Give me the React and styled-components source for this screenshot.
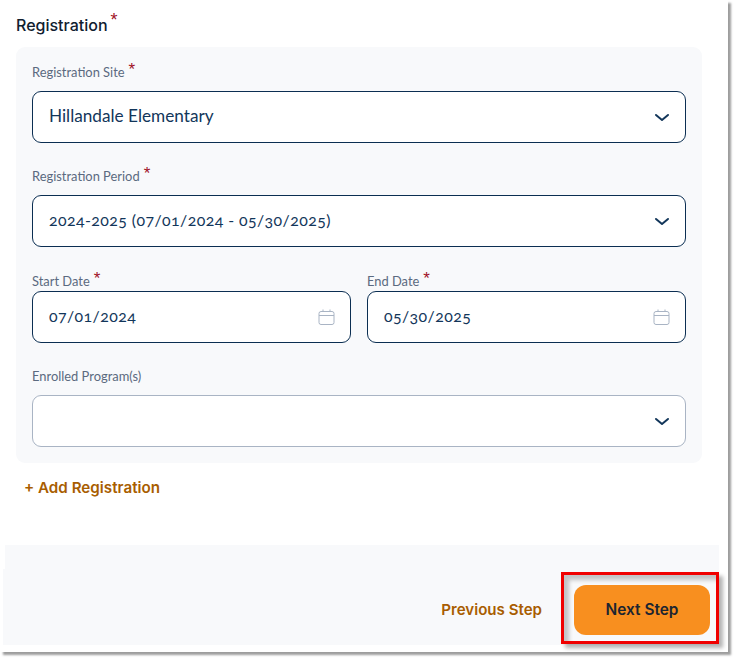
import { createGlobalStyle } from "styled-components"
import styled from "styled-components"

const GlobalStyle = createGlobalStyle`
  html, body {
    margin: 0;
    min-height: 661px;
    background: #fff;
  }
  body {
    font-family: "Inter", "Liberation Sans", sans-serif;
  }
  * {
    box-sizing: border-box;
  }
`

const Sheet = styled.div`
  width: 728px;
  height: 652px;
  background: #fff;
  box-shadow: 3px 3px 2px rgba(60, 60, 60, 0.5);
  display: flex;
  flex-direction: column;
`

const Content = styled.div`
  padding: 0 26px 0 16px;
  height: 545px;
`

const Heading = styled.h2`
  margin: 0;
  height: 47px;
  padding-top: 15px;
  font-size: 16px;
  line-height: 20px;
  font-weight: 500;
  color: #10202f;
`

const Star = styled.sup`
  font-family: "Liberation Sans", sans-serif;
  color: #a01127;
  font-size: ${(p) => p.$size || 17}px;
  font-weight: 400;
  line-height: 0;
  margin-left: ${(p) => (p.$size ? 3 : 4)}px;
  position: relative;
  top: ${(p) => (p.$size ? 1 : 3)}px;
  vertical-align: super;
`

const Card = styled.div`
  background: #f8f9fb;
  border-radius: 9px;
  padding: 16px;
  display: flex;
  flex-direction: column;
  gap: 24px;
`

const Row = styled.div`
  display: grid;
  grid-template-columns: 1fr 1fr;
  gap: 16px;
`

const Label = styled.label`
  display: block;
  height: ${(p) => p.$height}px;
  line-height: 18px;
  padding-top: ${(p) => (p.$height === 20 ? 1 : 0)}px;
  font-family: "Lato", "Liberation Sans", sans-serif;
  font-size: 12.9px;
  color: #5b6a80;
  white-space: nowrap;
`

const Control = styled.div`
  height: 52px;
  background: #fff;
  border: 1px solid ${(p) => (p.$muted ? "#a9b4c4" : "#0b2e52")};
  border-radius: 9px;
  padding: 0 15px 0 16px;
  display: flex;
  align-items: center;
  justify-content: space-between;
  font-family: "Lato", "Liberation Sans", sans-serif;
  font-variant-numeric: oldstyle-nums;
  font-size: ${(p) => p.$size || 15.9}px;
  letter-spacing: ${(p) => (p.$size ? 0 : 0.42)}px;
  color: #12365a;
`

const ControlText = styled.span`
  position: relative;
  top: -2px;
`

const Chevron = styled.svg`
  width: 16px;
  height: 10px;
  flex: none;
  position: relative;
  top: 1px;
`

const Calendar = styled.svg`
  width: 17px;
  height: 16px;
  flex: none;
`

const AddLink = styled.a`
  display: block;
  margin: 16px 0 0 8px;
  font-size: 15.2px;
  line-height: 18px;
  font-weight: 600;
  color: #a85d00;
`

const Footer = styled.div`
  margin-left: 5px;
  width: 714px;
  height: 100px;
  background: #f8f9fb;
  display: flex;
  align-items: flex-end;
  justify-content: flex-end;
  gap: 19px;
  padding-bottom: 1px;
  position: relative;

  &::before {
    content: "";
    position: absolute;
    left: -2px;
    top: 24px;
    bottom: 0;
    width: 2px;
    background: #f8f9fb;
  }
`

const BackLink = styled.a`
  font-size: 15.1px;
  font-weight: 600;
  line-height: 18px;
  color: #a85d00;
  margin-bottom: 25px;
`

const Highlight = styled.div`
  width: 158px;
  height: 72px;
  border: 3px solid #f00000;
  padding: 10px;
  box-shadow: 4px 4px 4px rgba(0, 0, 0, 0.3), inset 5px 5px 4px rgba(0, 0, 0, 0.22);
`

const NextButton = styled.button`
  display: block;
  width: 136px;
  height: 50px;
  border: 0;
  padding: 0 0 2px;
  border-radius: 12px;
  background: #f88f1f;
  font-family: inherit;
  font-size: 15.4px;
  font-weight: 600;
  color: #1c2530;
`

const ChevronIcon = () => (
  <Chevron viewBox="0 0 16 10" fill="none">
    <path d="M2 2l6 5 6-5" stroke="#12365a" strokeWidth="2" strokeLinecap="round" strokeLinejoin="round" />
  </Chevron>
)

const CalendarIcon = () => (
  <Calendar viewBox="0 0 17 16" fill="none" stroke="#a9b4c4" strokeWidth="1">
    <rect x="1" y="2.5" width="15" height="13" rx="2" />
    <path d="M1 6.5h15M5 0.5v2M12 0.5v2" />
  </Calendar>
)

const Required = ({ size }) => <Star $size={size}>*</Star>

const App = () => {
  return (
    <>
      <GlobalStyle />
      <Sheet>
        <Content>
          <Heading>
            Registration<Required size={18} />
          </Heading>
          <Card>
            <div>
              <Label $height={28}>Registration Site<Required /></Label>
              <Control $size={17.2}>
                <ControlText>Hillandale Elementary</ControlText>
                <ChevronIcon />
              </Control>
            </div>
            <div>
              <Label $height={28}>Registration Period<Required /></Label>
              <Control>
                <ControlText>2024-2025 (07/01/2024 - 05/30/2025)</ControlText>
                <ChevronIcon />
              </Control>
            </div>
            <Row>
              <div>
                <Label $height={20}>Start Date<Required /></Label>
                <Control>
                  <ControlText>07/01/2024</ControlText>
                  <CalendarIcon />
                </Control>
              </div>
              <div>
                <Label $height={20}>End Date<Required /></Label>
                <Control>
                  <ControlText>05/30/2025</ControlText>
                  <CalendarIcon />
                </Control>
              </div>
            </Row>
            <div>
              <Label $height={28}>Enrolled Program(s)</Label>
              <Control $muted>
                <span />
                <ChevronIcon />
              </Control>
            </div>
          </Card>
          <AddLink>+ Add Registration</AddLink>
        </Content>
        <Footer>
          <BackLink>Previous Step</BackLink>
          <Highlight>
            <NextButton>Next Step</NextButton>
          </Highlight>
        </Footer>
      </Sheet>
    </>
  )
}

export default App
